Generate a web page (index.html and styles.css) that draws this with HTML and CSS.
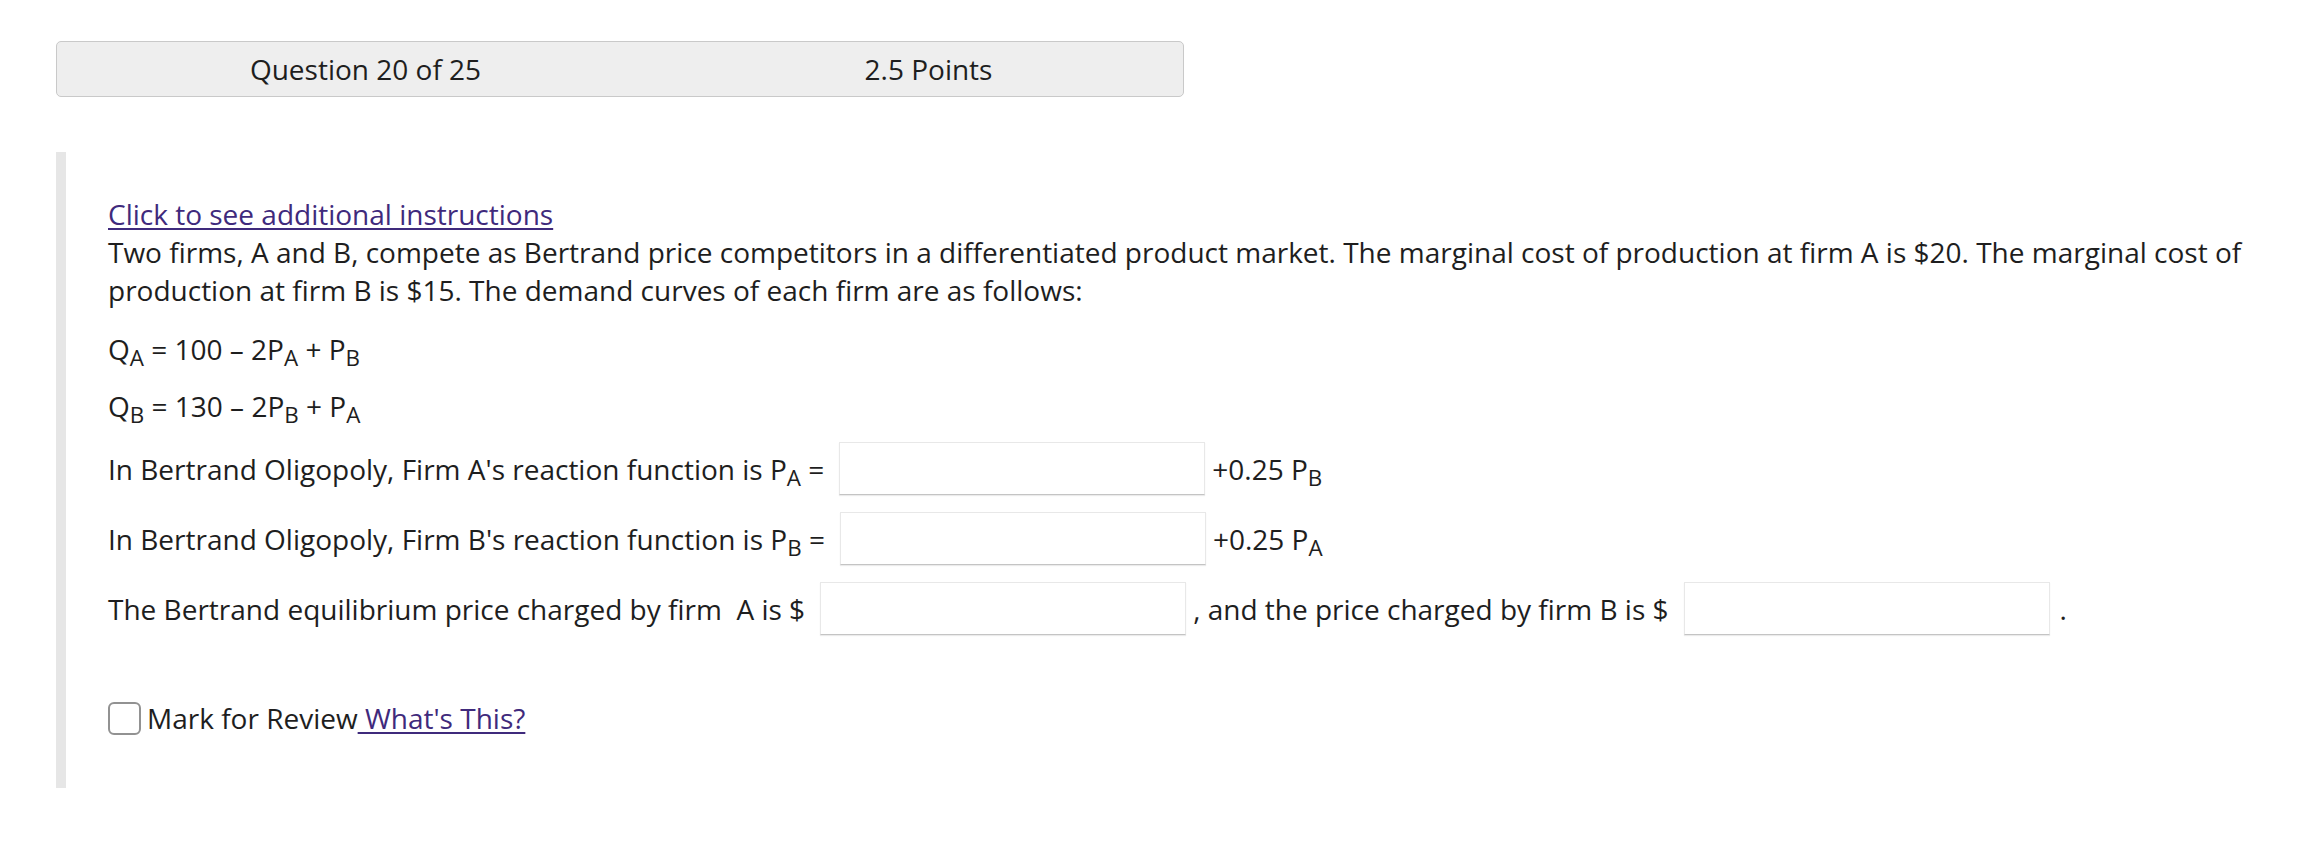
FILE: index.html
```html
<!DOCTYPE html>
<html>
<head>
<meta charset="utf-8">
<link rel="stylesheet" href="styles.css">
</head>
<body>
<div class="page">
  <div class="qheader">
    <div class="qh-cell">Question 20 of 25</div>
    <div class="qh-cell">2.5 Points</div>
  </div>
  <div class="question">
    <a class="link instr" href="#">Click to see additional instructions</a>
    <p class="stem">Two firms, A and B, compete as Bertrand price competitors in a differentiated product market. The marginal cost of production at firm A is $20. The marginal cost of production at firm B is $15. The demand curves of each firm are as follows:</p>
    <p class="eq">Q<sub>A</sub> = 100 – 2P<sub>A</sub> + P<sub>B</sub></p>
    <p class="eq">Q<sub>B</sub> = 130 – 2P<sub>B</sub> + P<sub>A</sub></p>
    <div class="row">
      <span class="txt">In Bertrand Oligopoly, Firm A's reaction function is P<sub>A</sub> =</span>
      <span class="field"></span>
      <span class="txt">+0.25 P<sub>B</sub></span>
    </div>
    <div class="row">
      <span class="txt">In Bertrand Oligopoly, Firm B's reaction function is P<sub>B</sub> =</span>
      <span class="field"></span>
      <span class="txt">+0.25 P<sub>A</sub></span>
    </div>
    <div class="row">
      <span class="txt">The Bertrand equilibrium price charged by firm &nbsp;A is $</span>
      <span class="field field-eq"></span>
      <span class="txt">, and the price charged by firm B is $</span>
      <span class="field field-eq"></span>
      <span class="txt dot">.</span>
    </div>
    <div class="review">
      <span class="checkbox"></span>
      <span class="txt">Mark for Review</span><a class="link" href="#">&nbsp;What's This?</a>
    </div>
  </div>
</div>
</body>
</html>
```

FILE: styles.css
```css
html, body {
  margin: 0;
  padding: 0;
  background: #ffffff;
}

body {
  font-family: "Open Sans", "Liberation Sans", sans-serif;
  font-size: 28px;
  line-height: 38px;
  color: #1e1e1e;
}

.page {
  padding: 41px 8px 0 56px;
}

.qheader {
  box-sizing: border-box;
  width: 1128px;
  height: 56px;
  display: grid;
  grid-template-columns: 1fr 1fr;
  align-items: center;
  background: #eeeeee;
  border: 1px solid #c9c9c9;
  border-radius: 5px;
}

.qh-cell {
  text-align: center;
  padding-left: 54px;
}

.question {
  margin-top: 55px;
  border-left: 10px solid #e6e6e6;
  padding: 43px 0 51px 42px;
}

.link {
  color: #3f2a7c;
  text-decoration: underline;
  text-decoration-thickness: 2px;
  text-underline-offset: 3px;
}

.instr {
  display: block;
  width: max-content;
}

p {
  margin: 0;
}

.stem {
  margin-bottom: 21px;
}

.eq {
  margin-bottom: 19px;
}

sub {
  font-size: 0.8em;
  line-height: 0;
  vertical-align: -0.28em;
}

.row {
  display: flex;
  align-items: center;
  height: 53px;
  margin-top: 17px;
}

.row:first-of-type {
  margin-top: -2px;
}

.field {
  box-sizing: border-box;
  width: 366px;
  height: 53px;
  margin: 0 7px 0 15px;
  background: #ffffff;
  border: 1px solid #e8e8e8;
  border-bottom-color: #c4c4c4;
  box-shadow: 0 1px 1px rgba(0, 0, 0, 0.08);
}

.field-eq {
  margin-left: 15px;
}

.dot {
  margin-left: 3px;
}

.review {
  display: flex;
  align-items: center;
  margin-top: 64px;
}

.checkbox {
  box-sizing: border-box;
  width: 33px;
  height: 33px;
  border: 2px solid #929292;
  border-radius: 6px;
  margin-right: 6px;
}
```
